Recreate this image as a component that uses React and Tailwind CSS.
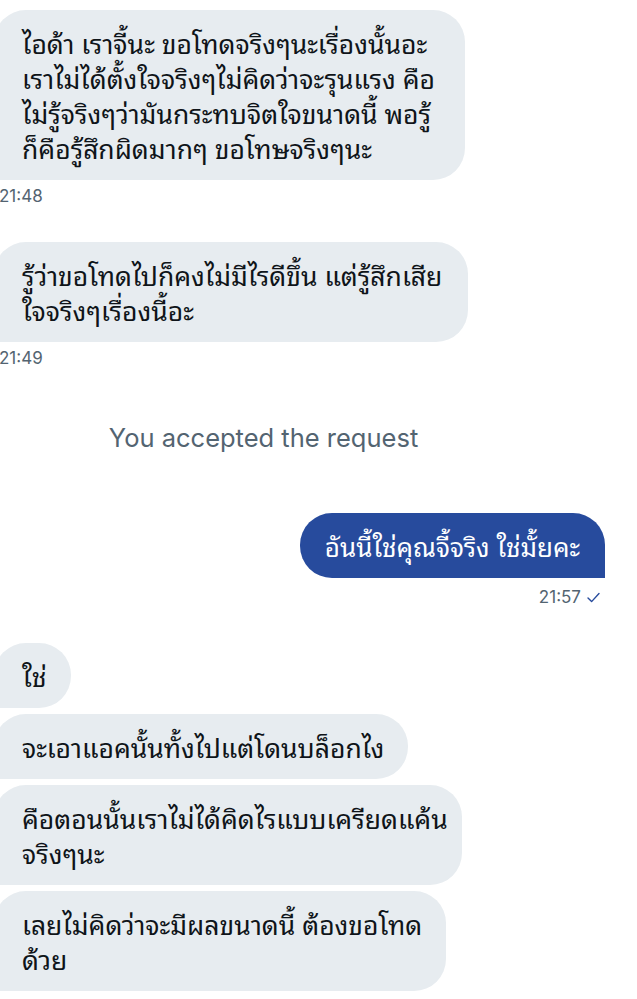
import React from 'react';

const thai = {
  fontFamily: '"Noto Sans Thai Looped", Loma, Garuda, Waree, "Noto Sans Thai", "Noto Sans", sans-serif',
};
const ui = { fontFamily: 'Inter, "Liberation Sans", sans-serif' };

function Received({ lines, className = '' }) {
  return (
    <div
      className={`self-start -ml-[6px] bg-[#e7ecf0] text-[#0f1419] text-[26.5px] leading-[35px] pl-[28px] pr-[24px] py-[15px] rounded-[32px] rounded-bl-none ${className}`}
      style={thai}
    >
      {lines.map((l, i) => (
        <div key={i} className="whitespace-nowrap">{l}</div>
      ))}
    </div>
  );
}

function Stamp({ children }) {
  return (
    <div className="self-start -ml-[1px] text-[17px] leading-[20px] text-[#536471]" style={ui}>
      {children}
    </div>
  );
}

export default function App() {
  return (
    <div className="w-[637px] h-[999px] overflow-hidden bg-white flex flex-col pt-[10px]">
      <Received
        lines={[
          'ไอด้า เราจี้นะ ขอโทดจริงๆนะเรื่องนั้นอะ',
          'เราไม่ได้ตั้งใจจริงๆไม่คิดว่าจะรุนแรง คือ',
          'ไม่รู้จริงๆว่ามันกระทบจิตใจขนาดนี้ พอรู้',
          'ก็คือรู้สึกผิดมากๆ ขอโทษจริงๆนะ',
        ]}
        className="w-[471px]"
      />
      <div className="mt-[6px] flex"><Stamp>21:48</Stamp></div>

      <Received
        lines={['รู้ว่าขอโทดไปก็คงไม่มีไรดีขึ้น แต่รู้สึกเสีย', 'ใจจริงๆเรื่องนี้อะ']}
        className="mt-[36px] w-[474px]"
      />
      <div className="mt-[6px] flex"><Stamp>21:49</Stamp></div>

      <div className="mt-[55px] pr-[110px] text-center text-[25.5px] leading-[30px] text-[#536471]" style={ui}>
        You accepted the request
      </div>

      <div
        className="self-end mr-[32px] mt-[60px] bg-[#274b9d] text-white text-[26px] leading-[35px] px-[25px] py-[15px] rounded-[32px] rounded-br-none whitespace-nowrap"
        style={thai}
      >
        อันนี้ใช่คุณจี้จริง ใช่มั้ยคะ
      </div>
      <div
        className="self-end mr-[37px] mt-[9px] flex items-center gap-[6px] text-[17px] leading-[20px] text-[#536471]"
        style={ui}
      >
        <span>21:57</span>
        <svg width="13" height="11" viewBox="0 0 13 11" fill="none">
          <path d="M1 6l3.6 3.6L12 1.5" stroke="#274b9d" strokeWidth="1.4" strokeLinecap="round" strokeLinejoin="round" />
        </svg>
      </div>

      <Received lines={['ใช่']} className="mt-[36px]" />
      <Received lines={['จะเอาแอคนั้นทั้งไปแต่โดนบล็อกไง']} className="mt-[6px]" />
      <Received lines={['คือตอนนั้นเราไม่ได้คิดไรแบบเครียดแค้น', 'จริงๆนะ']} className="mt-[6px] w-[468px]" />
      <Received lines={['เลยไม่คิดว่าจะมีผลขนาดนี้ ต้องขอโทด', 'ด้วย']} className="mt-[6px] w-[452px]" />
      <div className="mt-[6px] flex"><Stamp>21:50</Stamp></div>
    </div>
  );
}
